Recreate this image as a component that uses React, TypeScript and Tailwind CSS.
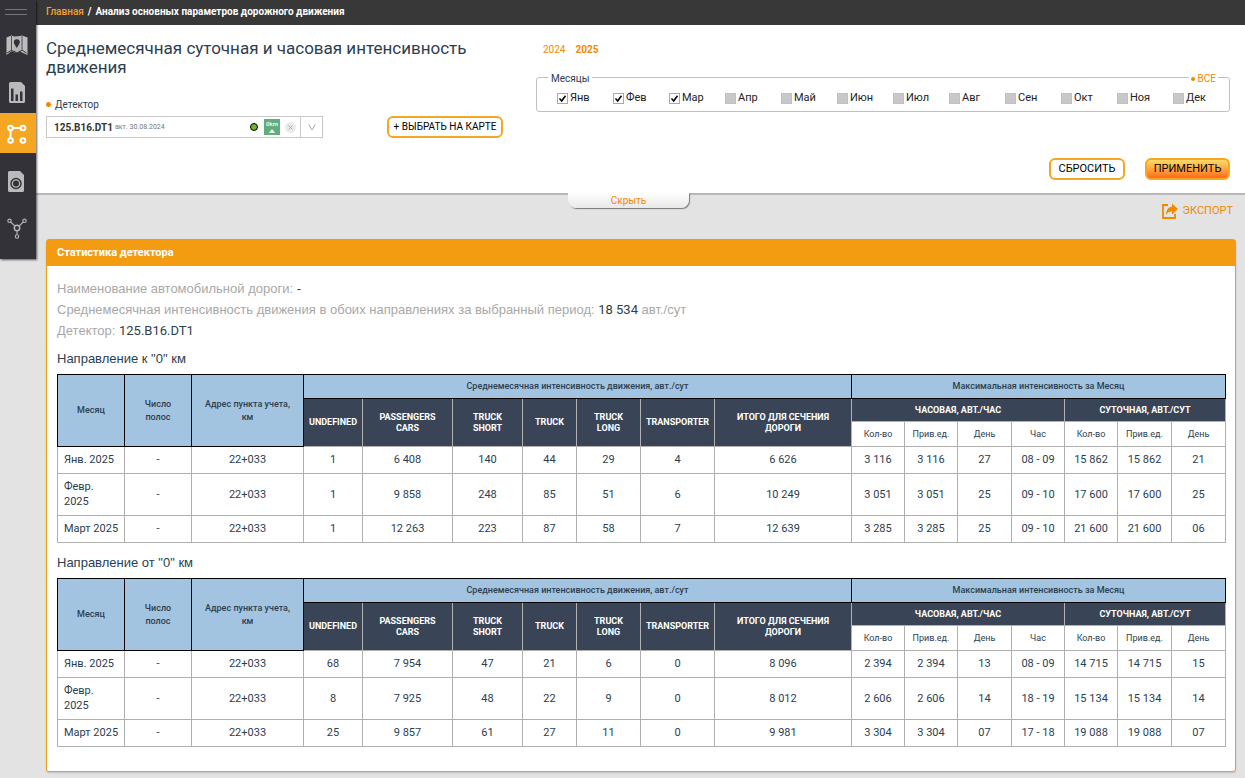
import { useState } from "react";

const MONTHS = ["Янв", "Фев", "Мар", "Апр", "Май", "Июн", "Июл", "Авг", "Сен", "Окт", "Ноя", "Дек"];
const ENABLED = 3;

const CLASSES = ["UNDEFINED", "PASSENGERS\nCARS", "TRUCK\nSHORT", "TRUCK", "TRUCK\nLONG", "TRANSPORTER", "ИТОГО ДЛЯ СЕЧЕНИЯ\nДОРОГИ"];
const MAX_COLUMNS = ["Кол-во", "Прив.ед.", "День", "Час", "Кол-во", "Прив.ед.", "День"];

const COLUMN_WIDTHS = [
  "w-[67px]", "w-[67px]", "w-[112px]", "w-[59px]", "w-[90px]", "w-[70px]", "w-[54px]", "w-[64px]", "w-[74px]",
  "w-[137px]", "w-[53px]", "w-[53px]", "w-[54px]", "w-[53px]", "w-[53px]", "w-[54px]", "w-[54px]",
];

type Direction = { title: string; rows: string[][] };

const DIRECTIONS: Direction[] = [
  {
    title: 'Направление к "0" км',
    rows: [
      ["Янв. 2025", "-", "22+033", "1", "6 408", "140", "44", "29", "4", "6 626", "3 116", "3 116", "27", "08 - 09", "15 862", "15 862", "21"],
      ["Февр. 2025", "-", "22+033", "1", "9 858", "248", "85", "51", "6", "10 249", "3 051", "3 051", "25", "09 - 10", "17 600", "17 600", "25"],
      ["Март 2025", "-", "22+033", "1", "12 263", "223", "87", "58", "7", "12 639", "3 285", "3 285", "25", "09 - 10", "21 600", "21 600", "06"],
    ],
  },
  {
    title: 'Направление от "0" км',
    rows: [
      ["Янв. 2025", "-", "22+033", "68", "7 954", "47", "21", "6", "0", "8 096", "2 394", "2 394", "13", "08 - 09", "14 715", "14 715", "15"],
      ["Февр. 2025", "-", "22+033", "8", "7 925", "48", "22", "9", "0", "8 012", "2 606", "2 606", "14", "18 - 19", "15 134", "15 134", "14"],
      ["Март 2025", "-", "22+033", "25", "9 857", "61", "27", "11", "0", "9 981", "3 304", "3 304", "07", "17 - 18", "19 088", "19 088", "07"],
    ],
  },
];

function MapIcon() {
  return (
    <svg width="22" height="21" viewBox="0 0 22 21" aria-hidden="true">
      <path d="M0.5 2.5 5.5 0.5 8 1.5V17l-2.5-.8L.5 20z" fill="#bdbdbd" />
      <path d="M8 1.5 14 1v15.5L11 18l-3-1z" fill="#b3b3b3" />
      <path d="M14 1l2-.5 5.500 2V20L16 17.500l-2-1z" fill="#bdbdbd" />
      <path d="M5.500 1v14M16 1v15" stroke="#323238" strokeWidth="0.800" />
      <path d="M10.800 13C9 10 7.800 8.800 7.800 7.300a3 3 0 0 1 6 0c0 1.500-1.200 2.700-3 5.700z" fill="#323238" />
      <path d="M1 18l4-2.500 3 .8 3 1.700 3-1.800 2.500-.7 4 2.500" stroke="#323238" strokeWidth="1" fill="none" />
    </svg>
  );
}

function ReportIcon() {
  return (
    <svg width="16" height="21" viewBox="0 0 16 21" aria-hidden="true">
      <path d="M1.500 0H12l4 4v15.500a1.500 1.500 0 0 1-1.500 1.500h-13A1.500 1.500 0 0 1 0 19.500v-18A1.500 1.500 0 0 1 1.500 0z" fill="#bababa" />
      <path d="M2 6.500h2.500V19H2zM6.500 12.500H9V19H6.500zM11 9.500h2.500V19H11z" fill="#323238" />
    </svg>
  );
}

function RouteIcon() {
  return (
    <svg width="20" height="21" viewBox="0 0 20 21" fill="none" stroke="#fff" strokeWidth="2" aria-hidden="true">
      <circle cx="3.500" cy="4" r="2.300" />
      <circle cx="16" cy="4" r="2.300" />
      <circle cx="3.500" cy="16.500" r="2.300" />
      <circle cx="16" cy="16.500" r="2.300" />
      <path d="M6 4h7.500M3.500 6.500V14" />
    </svg>
  );
}

function CameraIcon() {
  return (
    <svg width="16" height="21" viewBox="0 0 16 21" aria-hidden="true">
      <path d="M1.500 0H12l4 4v15.500a1.500 1.500 0 0 1-1.500 1.500h-13A1.500 1.500 0 0 1 0 19.500v-18A1.500 1.500 0 0 1 1.500 0z" fill="#bababa" />
      <circle cx="8" cy="12.500" r="5" fill="none" stroke="#323238" strokeWidth="1.400" />
      <circle cx="8" cy="12.500" r="3" fill="#323238" />
    </svg>
  );
}

function NetworkIcon() {
  return (
    <svg width="20" height="21" viewBox="0 0 20 21" fill="none" stroke="#b5b5b5" strokeWidth="1.100" aria-hidden="true">
      <circle cx="2.500" cy="2.800" r="1.700" />
      <circle cx="17.500" cy="2.800" r="1.700" />
      <circle cx="10" cy="10" r="2.700" strokeWidth="1.500" />
      <circle cx="10" cy="18.500" r="1.700" />
      <path d="M3.700 4 8 8.200M16.300 4 12 8.200M10 12.700v4" />
    </svg>
  );
}

function Sidebar() {
  return (
    <nav aria-label="Разделы" className="relative z-10 flex w-9 shrink-0 flex-col self-start bg-[#323238] pb-3 shadow-[1px_1px_2px_rgba(0,0,0,0.6)]">
      <button aria-label="Меню" className="flex h-[22px] flex-col gap-1 pt-[9px] pl-[5px]">
        <span className="block h-px w-[22px] bg-[#77777b]" />
        <span className="block h-px w-[22px] bg-[#77777b]" />
      </button>
      <a href="#map" aria-label="Карта" className="flex h-[46px] items-center pl-[6px]"><MapIcon /></a>
      <a href="#reports" aria-label="Отчёты" className="flex h-[45px] items-center pt-1 pl-[9px]"><ReportIcon /></a>
      <a href="#analysis" aria-label="Анализ" aria-current="page" className="flex h-10 items-center bg-[#f5a623] pt-[2px] pl-[7px]"><RouteIcon /></a>
      <a href="#cameras" aria-label="Камеры" className="flex h-14 items-center pl-2"><CameraIcon /></a>
      <a href="#network" aria-label="Сеть" className="flex h-[38px] items-center pl-[7px]"><NetworkIcon /></a>
    </nav>
  );
}

function DetectorField() {
  return (
    <div className="flex-none">
      <label htmlFor="detector" className="flex h-3 items-center gap-1 text-[10px]">
        <span className="size-[5px] rounded-full bg-[#f08a00]" />
        Детектор
      </label>
      <div className="mt-[6px] flex h-[22px] w-[277px] items-center border border-[#c8c8c8] bg-white pl-[7px]">
        <select id="detector" className="w-[61px] appearance-none bg-transparent text-[10px] font-bold text-[#333]">
          <option>125.B16.DT1</option>
        </select>
        <span className="flex-1 text-[7px] text-[#777]">акт. 30.08.2024</span>
        <span className="size-2 rounded-full border border-black bg-[#6fb52c]" />
        <span className="ml-[6px] flex size-4 flex-col items-center bg-[#5fae7c] text-[6px] leading-[10px] font-medium text-white">
          0km
          <svg width="6" height="4" viewBox="0 0 6 4" aria-hidden="true"><path d="M3 0l3 4H0z" fill="#fff" /></svg>
        </span>
        <button aria-label="Очистить" className="ml-[5px] flex size-[11px] items-center justify-center rounded-full bg-[#ebebeb]">
          <svg width="5" height="5" viewBox="0 0 5 5" aria-hidden="true"><path d="M.5.5l4 4M4.500.5l-4 4" stroke="#aaa" /></svg>
        </button>
        <span className="ml-1 flex h-full w-[22px] items-center justify-center border-l border-[#c8c8c8]">
          <svg width="8" height="7" viewBox="0 0 8 7" fill="none" aria-hidden="true"><path d="M.7.5 4 6 7.300.5" stroke="#aaa" /></svg>
        </span>
      </div>
    </div>
  );
}

function MonthsFieldset() {
  const [selected, setSelected] = useState<boolean[]>(MONTHS.map((_, i) => i < ENABLED));
  return (
    <fieldset className="relative mt-4 rounded-[3px] border border-[#c0c0c0] pb-1 pl-5">
      <legend className="-ml-[9px] h-3 px-[3px] text-[10px] leading-[15px]">Месяцы</legend>
      <button className="absolute -top-[10px] right-[11px] flex h-3 items-center gap-[3px] bg-white px-[2px] text-[10px] leading-3 text-[#f08a00]">
        <span className="size-1 rounded-full bg-[#f08a00]" />
        ВСЕ
      </button>
      <div className="grid grid-cols-12 pt-[6px]">
        {MONTHS.map((month, i) => (
          <label key={month} className="flex h-[18px] items-center gap-[2px] text-[11px] text-[#222]">
            <span className="relative size-[11px]">
              <input
                type="checkbox"
                checked={selected[i]}
                disabled={i >= ENABLED}
                onChange={() => setSelected(selected.map((v, k) => (k === i ? !v : v)))}
                className="peer block size-[11px] appearance-none border border-[#aaa] bg-white disabled:border-[#c0c0c0] disabled:bg-[#c8c8c8]"
              />
              <svg className="pointer-events-none absolute inset-0 hidden peer-checked:block" width="11" height="11" viewBox="0 0 11 11" fill="none" aria-hidden="true">
                <path d="M2.500 5.500 4.700 8 8.500 2.800" stroke="#000" strokeWidth="1.500" />
              </svg>
            </span>
            {month}
          </label>
        ))}
      </div>
    </fieldset>
  );
}

function StatsTable({ direction }: { direction: Direction }) {
  const blue = "border border-black bg-[#a2c4e0] text-[9px] font-medium leading-[13px] whitespace-pre-line";
  const dark = "border border-[#b0b0b0] bg-[#394557] text-[9px] font-bold leading-[11px] text-white whitespace-pre-line";
  return (
    <section>
      <h3 className="font-['Liberation_Sans',sans-serif] text-[13px] leading-5">{direction.title}</h3>
      <table aria-label={direction.title} className="mt-[5px] w-full table-fixed border-collapse text-center text-[11px] leading-[15px]">
        <colgroup>
          {COLUMN_WIDTHS.map((width, i) => <col key={i} className={width} />)}
        </colgroup>
        <thead>
          <tr className="h-6">
            <th rowSpan={3} className={blue}>Месяц</th>
            <th rowSpan={3} className={blue}>{"Число\nполос"}</th>
            <th rowSpan={3} className={blue}>{"Адрес пункта учета,\nкм"}</th>
            <th colSpan={7} className={blue}>Среднемесячная интенсивность движения, авт./сут</th>
            <th colSpan={7} className={blue}>Максимальная интенсивность за Месяц</th>
          </tr>
          <tr className="h-[23px]">
            {CLASSES.map((name) => <th key={name} rowSpan={2} className={dark}>{name}</th>)}
            <th colSpan={4} className={dark}>ЧАСОВАЯ, АВТ./ЧАС</th>
            <th colSpan={3} className={dark}>СУТОЧНАЯ, АВТ./СУТ</th>
          </tr>
          <tr className="h-[25px]">
            {MAX_COLUMNS.map((name, i) => <th key={i} className="border border-[#b0b0b0] text-[9px] font-normal">{name}</th>)}
          </tr>
        </thead>
        <tbody>
          {direction.rows.map((row) => (
            <tr key={row[0]}>
              {row.map((value, i) => (
                <td key={i} className="border border-[#b0b0b0] pt-[5px] pb-[6px] first:pr-[5px] first:pl-[6px] first:text-left">{value}</td>
              ))}
            </tr>
          ))}
        </tbody>
      </table>
    </section>
  );
}

export default function App() {
  return (
    <div className="flex min-h-screen bg-[#e3e3e3] font-['Roboto','Liberation_Sans',sans-serif] text-[#2c3e50]">
      <Sidebar />
      <div className="min-w-0 flex-1">
        <header className="flex h-[25px] items-center gap-1 bg-[#383838] px-[10px] pb-[3px] text-[10px] font-bold text-white">
          <a href="#home" className="font-medium text-[#f5a030]">Главная</a>
          <span>/</span>
          <span>Анализ основных параметров дорожного движения</span>
        </header>

        <div className="border-b-2 border-[#b8b8b8] bg-white pr-[15px] pb-[13px] pl-[10px]">
          <div className="flex">
            <div className="w-[490px] shrink-0 pt-[14px]">
              <h1 className="w-[450px] text-[17px] leading-[19px]">Среднемесячная суточная и часовая интенсивность движения</h1>
              <div className="mt-[21px] flex items-end justify-between pr-[33px]">
                <DetectorField />
                <button className="h-[22px] w-[116px] rounded-md border-2 border-[#f5a623] bg-white text-[10px] leading-none text-black">+ ВЫБРАТЬ НА КАРТЕ</button>
              </div>
            </div>
            <div className="min-w-0 flex-1 pt-[18px]">
              <div className="flex h-3 items-center gap-[10px] pl-[7px] text-[10px] text-[#f08a00]">
                <button>2024</button>
                <button className="font-bold">2025</button>
              </div>
              <MonthsFieldset />
            </div>
          </div>
          <div className="mt-5 flex justify-end gap-5 text-[11px] text-black">
            <button className="h-[22px] w-[76px] rounded-md border-2 border-[#f5a623] bg-white pb-[2px] leading-none">СБРОСИТЬ</button>
            <button className="h-[22px] w-[85px] rounded-md border-2 border-[#f5a623] bg-linear-to-b from-[#ffd966] to-[#ff6a13] pb-[2px] leading-none">ПРИМЕНИТЬ</button>
          </div>
        </div>

        <div className="relative -mt-[2px] flex justify-center pr-6">
          <button className="h-[15px] w-[121px] rounded-b-lg bg-linear-to-b from-white to-[#e8e8e8] text-[10px] leading-3 text-[#f08a00] shadow-[1px_1px_1px_#777]">Скрыть</button>
        </div>

        <main className="px-[10px] pb-[6px]">
          <div className="-mt-[5px] flex justify-end pr-[2px]">
            <button className="flex h-4 items-center gap-[5px] text-[11px] text-[#f08a00]">
              <svg width="16" height="16" viewBox="0 0 16 16" aria-hidden="true">
                <path d="M6 2H1v13h12v-4" fill="none" stroke="#f08a00" strokeWidth="1.800" />
                <path d="M10 .5 16 6l-6 5.500V8.500C7 8.300 5.500 9.500 4 12c0-4.500 2-8 6-8.200z" fill="#f08a00" />
              </svg>
              ЭКСПОРТ
            </button>
          </div>

          <section className="mt-5 -mr-px rounded-[3px] border border-[#f39c12] bg-white shadow-[0_1px_2px_rgba(0,0,0,0.15)]">
            <h2 className="h-[26px] bg-[#f39c12] px-[10px] text-[11px] leading-[25px] font-bold text-white">Статистика детектора</h2>
            <div className="pt-3 pr-[11px] pb-6 pl-[10px]">
              <div className="font-['Liberation_Sans',sans-serif] text-[13px] leading-[21px] text-[#a8a8a8]">
                <p>Наименование автомобильной дороги: <span className="text-[#2c3e50]">-</span></p>
                <p>Среднемесячная интенсивность движения в обоих направлениях за выбранный период: <span className="font-['Roboto',sans-serif] text-[#2c3e50]">18 534</span> авт./сут</p>
                <p>Детектор: <span className="font-['Roboto',sans-serif] text-[#2c3e50]">125.B16.DT1</span></p>
              </div>
              <div className="mt-2 flex flex-col gap-[10px]">
                {DIRECTIONS.map((direction) => <StatsTable key={direction.title} direction={direction} />)}
              </div>
            </div>
          </section>
        </main>
      </div>
    </div>
  );
}
